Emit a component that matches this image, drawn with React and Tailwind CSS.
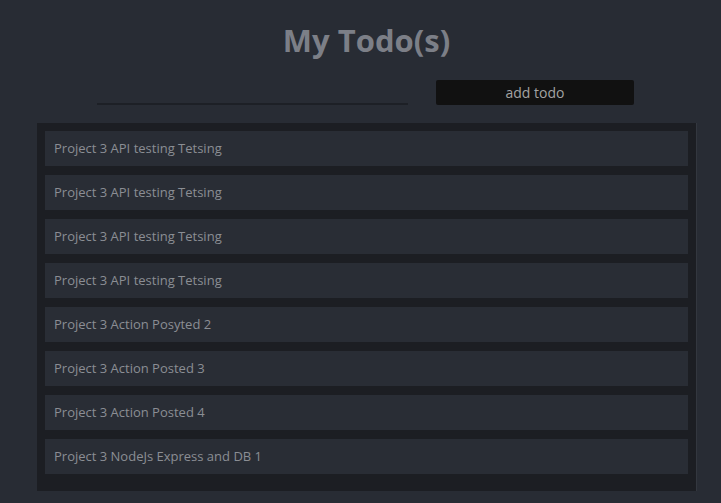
const todos = [
  "Project 3 API testing Tetsing",
  "Project 3 API testing Tetsing",
  "Project 3 API testing Tetsing",
  "Project 3 API testing Tetsing",
  "Project 3 Action Posyted 2",
  "Project 3 Action Posted 3",
  "Project 3 Action Posted 4",
  "Project 3 NodeJs Express and DB 1",
];

export default function App() {
  return (
    <div className="min-h-[503px] w-full bg-[#282c34] font-['Open_Sans','Noto_Sans',sans-serif]">
      <h1 className="pl-[12px] pt-[18px] text-center text-[31px] font-bold leading-[44px] text-[#7c7f87]">
        My Todo(s)
      </h1>

      <form className="mt-[18px] flex items-end justify-center gap-[28px] pl-[10px]">
        <input
          type="text"
          className="h-[24px] w-[311px] border-b-2 border-[#1d2026] bg-transparent text-sm text-[#aaa] outline-none"
        />
        <button
          type="button"
          className="h-[25px] w-[198px] rounded-[2px] bg-[#111111] text-[14px] leading-[25px] text-[#a3a3a3]"
        >
          add todo
        </button>
      </form>

      <ul className="mx-[37px] mt-[18px] flex w-[659px] flex-col gap-[9px] bg-[#1c1e23] px-[8px] pb-[17px] pt-[8px] shadow-[1px_0_0_#33373f]">
        {todos.map((t, i) => (
          <li
            key={i}
            className="flex h-[35px] items-center bg-[#292d35] pl-[9px] text-[13px] text-[#8b8e94]"
          >
            {t}
          </li>
        ))}
      </ul>
    </div>
  );
}
